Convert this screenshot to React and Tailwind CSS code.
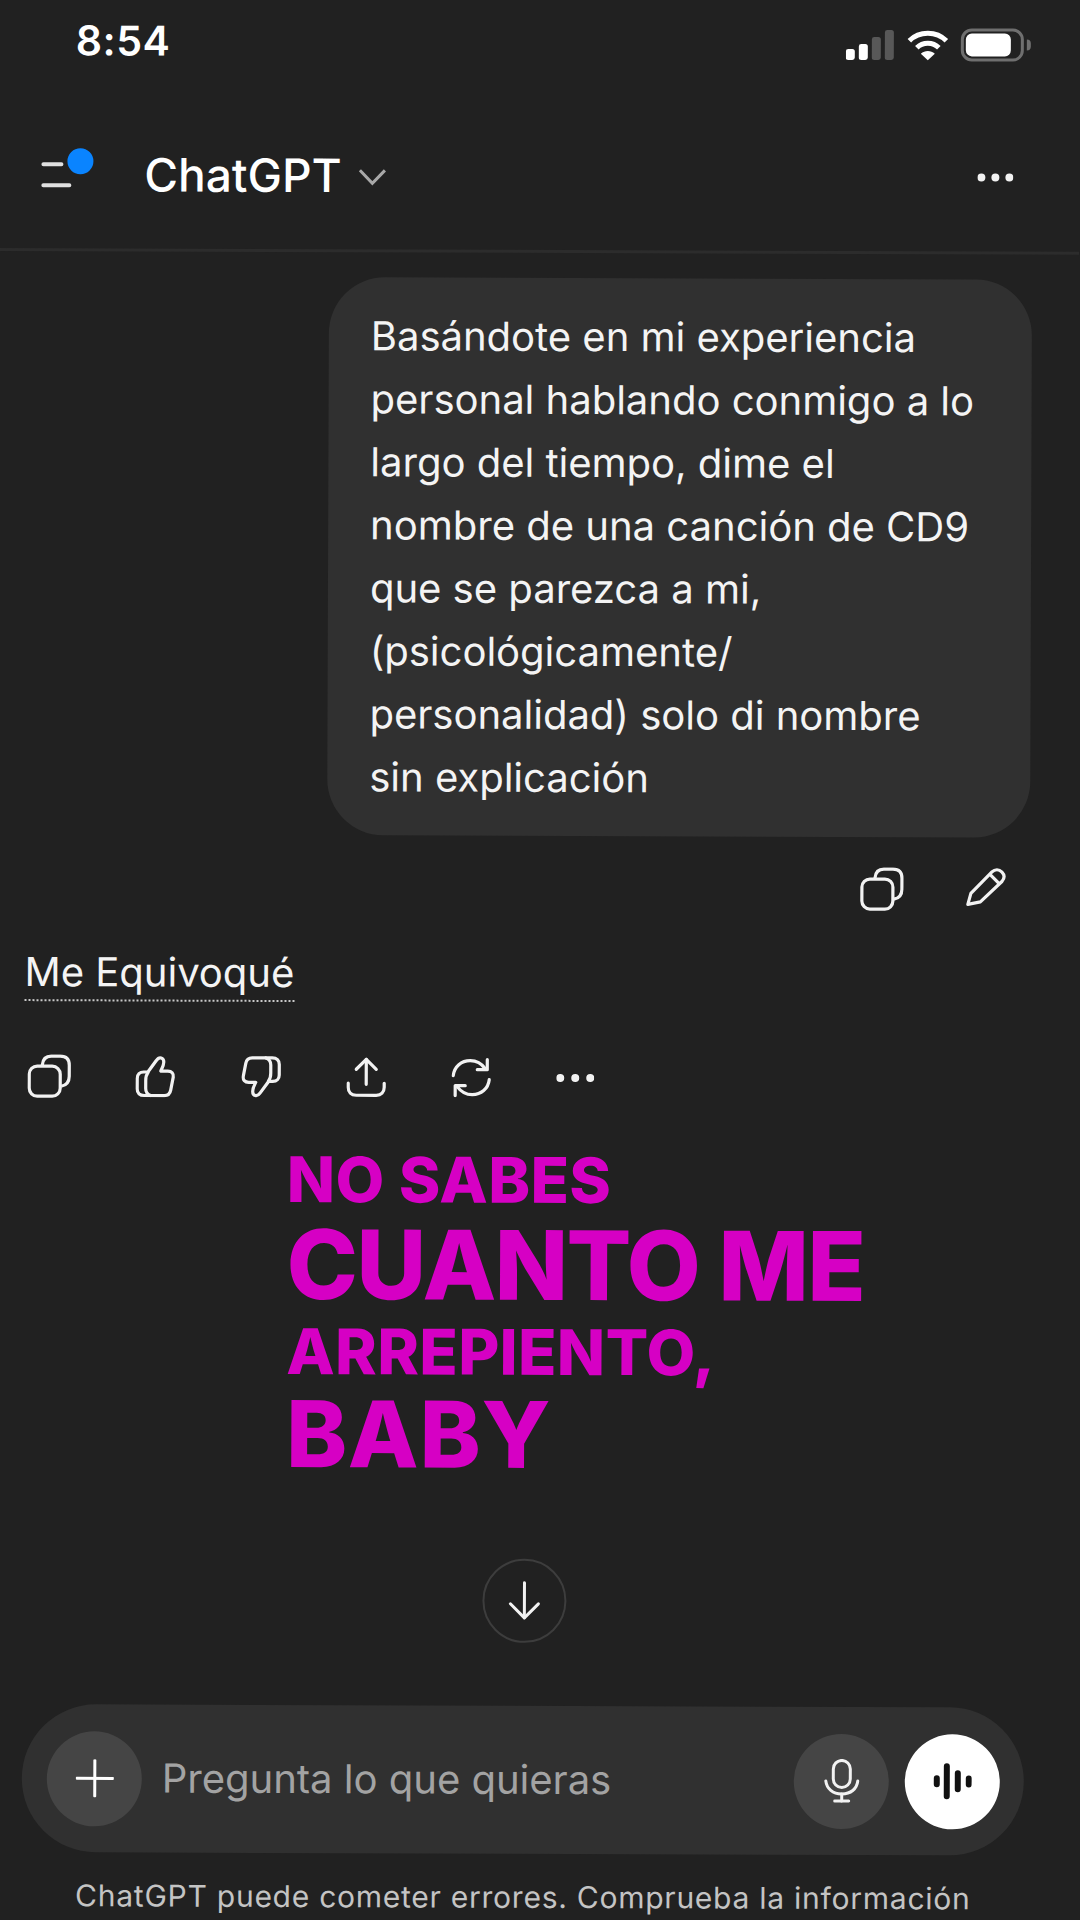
import React from "react";

function CopyIcon({ className }) {
  return (
    <svg className={className} width="44" height="44" viewBox="0 0 44 44" fill="none" stroke="#f2f2f2" strokeWidth="3.2">
      <rect x="2" y="12" width="31" height="30" rx="8" />
      <path d="M15 11C15.5 5 18.5 2 24 2H33C39 2 42 5 42 11V22C42 28 39.500 31 34 32" />
    </svg>
  );
}

function PencilIcon({ className }) {
  return (
    <svg className={className} width="40" height="40" viewBox="0 0 40 40" fill="none" stroke="#f2f2f2" strokeWidth="3.2" strokeLinejoin="round">
      <path d="M2 37L5 26L26 4.500C29 1.500 33 1.500 36 4.500C39 7.500 38.500 11 36 14L14.500 34.500Z" />
      <path d="M24 7L33.500 16.500" />
    </svg>
  );
}

function ThumbIcon({ className }) {
  return (
    <svg className={className} width="40" height="42" viewBox="0 0 40 42" fill="none" stroke="#f2f2f2" strokeWidth="3.2" strokeLinejoin="round" strokeLinecap="round">
      <path d="M13 16L21 5C24 .5 28.500 2 28.500 6.500C28.500 10 27 12.500 25.500 15.500H32.500C36.500 15.500 38.500 18 38 21.500L35.500 34.500C34.800 38.500 32.500 40 29 40H9C4.500 40 2 37.500 2 33.500V23C2 19 4.500 16.500 8.500 16.500H13" />
      <path d="M12.500 17.500C10.500 20 10.500 22 10.500 25V33C10.500 37 12.500 39 15.500 40" />
    </svg>
  );
}

function ShareIcon({ className }) {
  return (
    <svg className={className} width="40" height="40" viewBox="0 0 40 40" fill="none" stroke="#f2f2f2" strokeWidth="3.2" strokeLinecap="round" strokeLinejoin="round">
      <path d="M20 2V27" />
      <path d="M10 12L20 2L30 12" />
      <path d="M2 26V30C2 35 5 38 10 38H30C35 38 38 35 38 30V26" />
    </svg>
  );
}

function RegenIcon({ className }) {
  return (
    <svg className={className} width="40" height="40" viewBox="0 0 40 40" fill="none" stroke="#f2f2f2" strokeWidth="3.2" strokeLinecap="round" strokeLinejoin="round">
      <path d="M2 18C3 9 10 3 19 3C25 3 30 5.500 34 11" />
      <path d="M36 2V12H26" />
      <path d="M38 22C37 31 30 37 21 37C15 37 10 34.500 6 29" />
      <path d="M4 38V28H14" />
    </svg>
  );
}

function ThreeDots({ className, r = 4, width = 38 }) {
  return (
    <svg className={className} width={width} height="10" viewBox={`0 0 ${width} 10`} fill="#f2f2f2">
      <circle cx={r} cy="5" r={r} />
      <circle cx={width / 2} cy="5" r={r} />
      <circle cx={width - r} cy="5" r={r} />
    </svg>
  );
}

function StatusIcons() {
  return (
    <div className="flex items-end">
      <svg width="50" height="32" viewBox="0 0 50 32">
        <rect x="0" y="20" width="9" height="11" rx="2.500" fill="#fff" />
        <rect x="13" y="15" width="9" height="16" rx="2.500" fill="#fff" />
        <rect x="26" y="8" width="9" height="23" rx="2.500" fill="#585858" />
        <rect x="39" y="1" width="9" height="30" rx="2.500" fill="#585858" />
      </svg>
      <svg className="ml-[11px]" width="42" height="32" viewBox="0 0 42 32" fill="none" stroke="#fff" strokeWidth="5">
        <path d="M2.500 11.500C12.500 1.500 29.500 1.500 39.500 11.500" />
        <path d="M10 18.500C16 12.500 26 12.500 32 18.500" />
        <path d="M21 31L14 24.500C18 21 24 21 28 24.500Z" fill="#fff" stroke="none" />
      </svg>
      <div className="ml-[12px] flex items-center">
        <div className="flex h-[33px] w-[63px] items-center rounded-[11px] border-[3px] border-[#6f6f6f] pl-[2px]">
          <div className="h-[23px] w-[45px] rounded-[6px] bg-white" />
        </div>
        <div className="ml-[3px] h-[11px] w-[4px] rounded-r-full bg-[#6f6f6f]" />
      </div>
    </div>
  );
}

const bubbleLines = [
  "Basándote en mi experiencia",
  "personal hablando conmigo a lo",
  "largo del tiempo, dime el",
  "nombre de una canción de CD9",
  "que se parezca a mi,",
  "(psicológicamente/",
  "personalidad) solo di nombre",
  "sin explicación",
];

export default function App() {
  return (
    <div className="h-[1920px] w-[1080px] overflow-hidden bg-[#212121] font-['Inter',sans-serif] text-white">
      <div className="flex h-[1920px] w-[1080px] origin-top-left rotate-[0.2deg] flex-col">
        {/* status bar */}
        <div className="flex h-[82px] items-start justify-between pl-[76px] pr-[49px] pt-[17px]">
          <span className="text-[41px] leading-[46px] font-semibold tracking-[0.5px]">8:54</span>
          <div className="pt-[8px]">
            <StatusIcons />
          </div>
        </div>

        {/* top navigation */}
        <header className="flex h-[169px] items-center border-b-[3px] border-[#2c2c2c] pt-[18px] pl-[42px] pr-[66px]">
          <div className="relative h-[50px] w-[52px]">
            <div className="absolute left-0 top-[13px] h-[4px] w-[22px] rounded-full bg-[#e0e0e0]" />
            <div className="absolute left-0 top-[34px] h-[4px] w-[30px] rounded-full bg-[#e0e0e0]" />
            <div className="absolute left-[26px] top-[-1px] h-[26px] w-[26px] rounded-full bg-[#0a84ff]" />
          </div>
          <span className="ml-[51px] text-[46px] leading-[52px] font-medium">ChatGPT</span>
          <svg className="ml-[17px] mt-[4px]" width="28" height="18" viewBox="0 0 28 18" fill="none" stroke="#a8a8a8" strokeWidth="3">
            <path d="M1.500 2L14 15L26.500 2" />
          </svg>
          <ThreeDots className="ml-auto" r={4} width={36} />
        </header>

        {/* user message */}
        <div className="ml-[330px] mt-[25px] h-[558px] w-[703px] rounded-[56px] bg-[#303030] pl-[42px] pt-[27px] text-[40px] leading-[63px] text-[#f4f4f4]">
          {bubbleLines.map((line) => (
            <div key={line}>{line}</div>
          ))}
        </div>
        <div className="mt-[30px] flex justify-end pr-[71px]">
          <CopyIcon />
          <PencilIcon className="ml-[62px]" />
        </div>

        {/* assistant answer */}
        <div className="ml-[28px] mt-[41px] w-fit border-b-[2px] border-dotted border-[#c8c8c8] pb-[4px] text-[40px] leading-[46px] text-[#f4f4f4]">
          Me Equivoqué
        </div>
        <div className="ml-[31px] mt-[53px] flex h-[44px] items-center">
          <CopyIcon />
          <ThumbIcon className="ml-[64px]" />
          <ThumbIcon className="ml-[66px] rotate-180" />
          <ShareIcon className="ml-[65px]" />
          <RegenIcon className="ml-[65px]" />
          <ThreeDots className="ml-[65px]" />
        </div>

        {/* lyric sticker */}
        <div className="ml-[291px] mt-[46px] font-extrabold text-[#d600c4]">
          <div className="text-[63px] leading-[69px] tracking-[0.4px]">NO SABES</div>
          <div className="text-[96px] leading-[100px] tracking-[-1.7px]">CUANTO ME</div>
          <div className="text-[63px] leading-[74px] tracking-[0.4px]">ARREPIENTO,</div>
          <div className="text-[92px] leading-[92px] tracking-[0.8px]">BABY</div>
        </div>

        {/* jump to latest */}
        <div className="mt-[78px] flex justify-center pr-[21px]">
          <div className="flex h-[84px] w-[84px] items-center justify-center rounded-full border-[2px] border-[#3d3d3d]">
            <svg width="36" height="40" viewBox="0 0 36 40" fill="none" stroke="#f2f2f2" strokeWidth="3" strokeLinecap="round" strokeLinejoin="round">
              <path d="M18 2V37" />
              <path d="M4 23L18 37L32 23" />
            </svg>
          </div>
        </div>

        {/* composer */}
        <div className="ml-[28px] mt-[63px] flex h-[148px] w-[1002px] items-center rounded-full bg-[#303030] pl-[25px] pr-[24px]">
          <div className="flex h-[95px] w-[95px] items-center justify-center rounded-full bg-[#454545]">
            <svg width="38" height="38" viewBox="0 0 38 38" stroke="#fff" strokeWidth="3" strokeLinecap="round">
              <path d="M19 1V37" />
              <path d="M1 19H37" />
            </svg>
          </div>
          <span className="ml-[20px] text-[40px] leading-[46px] text-[#a3a3a3]">Pregunta lo que quieras</span>
          <div className="ml-auto flex h-[95px] w-[95px] items-center justify-center rounded-full bg-[#454545]">
            <svg width="36" height="44" viewBox="0 0 36 44" fill="none" stroke="#f2f2f2" strokeWidth="3" strokeLinecap="round">
              <rect x="9.500" y="1.500" width="17" height="27" rx="8.500" />
              <path d="M2 22C3 30 9 35 18 35C27 35 33 30 34 22" />
              <path d="M18 35V42" />
              <path d="M11 42H25" />
            </svg>
          </div>
          <div className="ml-[16px] flex h-[95px] w-[95px] items-center justify-center rounded-full bg-white">
            <svg width="40" height="38" viewBox="0 0 40 38" fill="#111" className="ml-[-2px]">
              <rect x="2" y="13" width="6" height="12" rx="3" />
              <rect x="12" y="1" width="6" height="36" rx="3" />
              <rect x="23" y="8" width="6" height="22" rx="3" />
              <rect x="34" y="13" width="6" height="12" rx="3" />
            </svg>
          </div>
        </div>

        {/* disclaimer */}
        <div className="mt-[24px] pr-[21px] text-center text-[30px] leading-[38px] tracking-[0.75px] text-[#c4c4c4]">
          ChatGPT puede cometer errores. Comprueba la información
        </div>
      </div>
    </div>
  );
}
